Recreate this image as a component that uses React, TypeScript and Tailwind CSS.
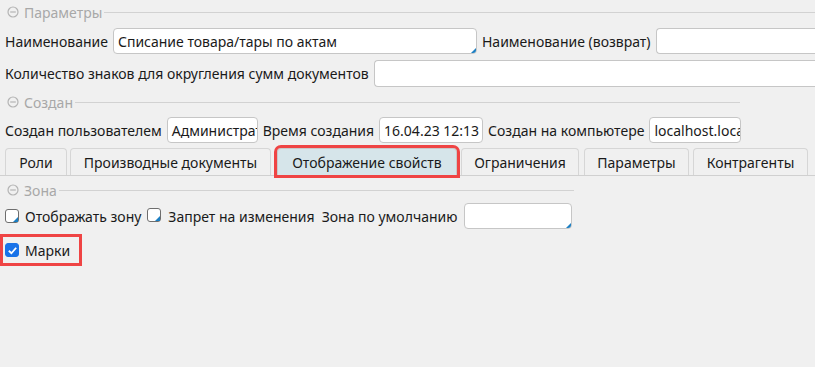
import React from "react";

const Corner: React.FC = () => (
  <span className="absolute right-0 bottom-0 w-0 h-0 border-l-[5px] border-l-transparent border-b-[5px] border-b-[#1b7ec2]" />
);

const Field: React.FC<{ w: string; value?: string; corner?: boolean; open?: boolean }> = ({
  w,
  value,
  corner,
  open,
}) => (
  <div
    className={`relative h-[26px] bg-white border border-[#c6c6c6] ${
      open ? "rounded-l-[4px] border-r-0" : "rounded-[4px]"
    } ${w} flex items-center px-[4px] overflow-hidden whitespace-nowrap shrink-0`}
  >
    {value}
    {corner && <Corner />}
  </div>
);

const Header: React.FC<{ title: string; line: string }> = ({ title, line }) => (
  <div className="flex items-center h-[20px] pl-[7px] text-[#a8a8a8]">
    <svg width="12" height="12" viewBox="0 0 12 12" className="mr-[5px]">
      <circle cx="6" cy="6" r="5" fill="none" stroke="#b4b4b4" strokeWidth="1.2" />
      <line x1="3.2" y1="6" x2="8.8" y2="6" stroke="#b4b4b4" strokeWidth="1.2" />
    </svg>
    <span>{title}</span>
    <div className={`ml-[2px] h-px bg-[#d2d2d2] ${line}`} />
  </div>
);

const Check: React.FC<{ checked?: boolean }> = ({ checked }) => (
  <span
    className={`relative inline-flex items-center justify-center w-[14px] h-[14px] rounded-[3px] border shrink-0 ${
      checked ? "bg-[#1a73e8] border-[#1a73e8]" : "bg-white border-[#6e6e6e]"
    }`}
  >
    {checked && (
      <svg width="11" height="11" viewBox="0 0 12 12">
        <path d="M2 6.3 L4.8 9 L10 3" fill="none" stroke="white" strokeWidth="2" />
      </svg>
    )}
    {!checked && <Corner />}
  </span>
);

const Tab: React.FC<{ label: string; w: string; active?: boolean }> = ({ label, w, active }) => (
  <div
    className={`h-[27px] ${w} flex items-center justify-center border border-b-0 rounded-t-[4px] shrink-0 ${
      active
        ? "bg-[#d6e5ea] border-[#c9c9c9] outline-[3px] outline-[#ef4444]"
        : "bg-[#f0f0f0] border-[#d6d6d6]"
    }`}
  >
    {label}
  </div>
);

export default function App() {
  return (
    <div
      className="w-[815px] h-[367px] bg-[#f0f0f0] text-[#1a1a1a] text-[14px] overflow-hidden"
      style={{ fontFamily: '"Noto Sans", sans-serif' }}
    >
      <div className="pt-[2px]">
        <Header title="Параметры" line="flex-1" />
      </div>
      <div className="flex items-center gap-[5px] pl-[5px] mt-[6px]">
        <span>Наименование</span>
        <Field w="w-[364px]" value="Списание товара/тары по актам" corner />
        <span>Наименование (возврат)</span>
        <Field w="flex-1" open />
      </div>
      <div className="flex items-center gap-[5px] pl-[5px] mt-[6px]">
        <span>Количество знаков для округления сумм документов</span>
        <Field w="flex-1 h-[27px]" open />
      </div>
      <div className="mt-[5px]">
        <Header title="Создан" line="w-[665px]" />
      </div>
      <div className="flex items-center gap-[5px] pl-[5px] mt-[5px]">
        <span>Создан пользователем</span>
        <Field w="w-[91px]" value="Администратор" />
        <span>Время создания</span>
        <Field w="w-[104px]" value="16.04.23 12:13" />
        <span>Создан на компьютере</span>
        <Field w="w-[92px]" value="localhost.localdomain" />
      </div>
      <div className="flex items-end pl-[5px] mt-[5px] border-b border-[#d0d0d0]">
        <Tab label="Роли" w="w-[62px]" />
        <div className="ml-[3px]">
          <Tab label="Производные документы" w="w-[201px]" />
        </div>
        <div className="ml-[6px]">
          <Tab label="Отображение свойств" w="w-[180px]" active />
        </div>
        <div className="ml-[4px]">
          <Tab label="Ограничения" w="w-[118px]" />
        </div>
        <div className="ml-[5px]">
          <Tab label="Параметры" w="w-[105px]" />
        </div>
        <div className="ml-[4px]">
          <Tab label="Контрагенты" w="w-[115px]" />
        </div>
      </div>
      <div className="mt-[4px]">
        <Header title="Зона" line="w-[515px]" />
      </div>
      <div className="flex items-center pl-[5px] mt-[3px]">
        <Check />
        <span className="ml-[6px]">Отображать зону</span>
        <span className="ml-[6px]">
          <Check />
        </span>
        <span className="ml-[7px]">Запрет на изменения</span>
        <span className="ml-[7px]">Зона по умолчанию</span>
        <span className="ml-[7px]">
          <Field w="w-[108px]" corner />
        </span>
      </div>
      <div className="mt-[5px] w-[82px] h-[32px] border-[3px] border-[#ef4444] flex items-center pl-[2px]">
        <Check checked />
        <span className="ml-[6px]">Марки</span>
      </div>
    </div>
  );
}
